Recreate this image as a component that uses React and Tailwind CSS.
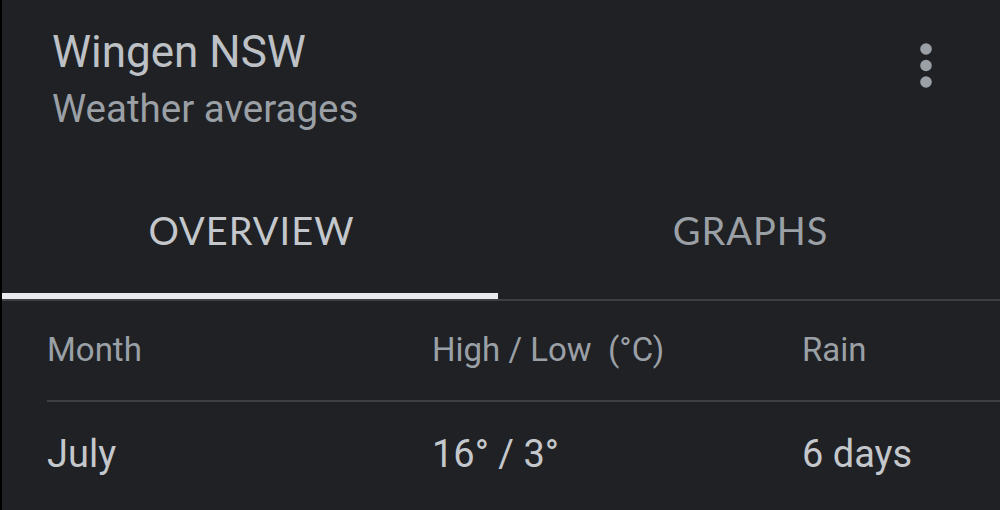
export default function App() {
  return (
    <div
      className="w-full h-[510px] overflow-hidden bg-[#202124] border-l-2 border-black"
      style={{ fontFamily: 'Roboto, "Liberation Sans", sans-serif' }}
    >
      {/* header */}
      <div className="flex justify-between pl-[50px] pr-[62px] pt-[26px]">
        <div>
          <div className="text-[44px] leading-[52px] text-[#bdc1c6]">Wingen NSW</div>
          <div className="mt-[8px] text-[38.5px] leading-[46px] text-[#9aa0a6]">Weather averages</div>
        </div>
        <button className="mt-[17px] self-start w-[24px] flex justify-center">
          <svg width="12" height="45" viewBox="0 0 12 45" fill="#9aa0a6">
            <circle cx="6" cy="6" r="5.8" />
            <circle cx="6" cy="22.5" r="5.8" />
            <circle cx="6" cy="39" r="5.8" />
          </svg>
        </button>
      </div>

      {/* tabs */}
      <div
        className="grid grid-cols-2 border-b-2 border-[#3c4043]"
        style={{ fontFamily: 'Lato, "Open Sans", sans-serif' }}
      >
        <div className="flex flex-col items-center">
          <div className="pt-[75px] pb-[40px] text-[38px] leading-[46px] tracking-[1px] text-[#c4c7cb]">OVERVIEW</div>
          <div className="h-[6px] w-[496px] self-start bg-[#e8eaed]" />
        </div>
        <div className="flex flex-col items-center">
          <div className="pt-[75px] pb-[40px] text-[38px] leading-[46px] tracking-[1px] text-[#9aa0a6]">GRAPHS</div>
          <div className="h-[6px] w-full" />
        </div>
      </div>

      {/* table */}
      <div className="pl-[45px]">
        <div className="grid grid-cols-[385px_370px_1fr] pt-[29px] pb-[30px] border-b-2 border-[#3c4043] text-[33px] leading-[40px] text-[#9aa0a6]">
          <div>Month</div>
          <div>High / Low&nbsp; (°C)</div>
          <div>Rain</div>
        </div>
        <div className="grid grid-cols-[385px_370px_1fr] pt-[29px] text-[38px] leading-[46px] text-[#c4c7cb]">
          <div>July</div>
          <div>16° / 3°</div>
          <div>6 days</div>
        </div>
      </div>
    </div>
  )
}
